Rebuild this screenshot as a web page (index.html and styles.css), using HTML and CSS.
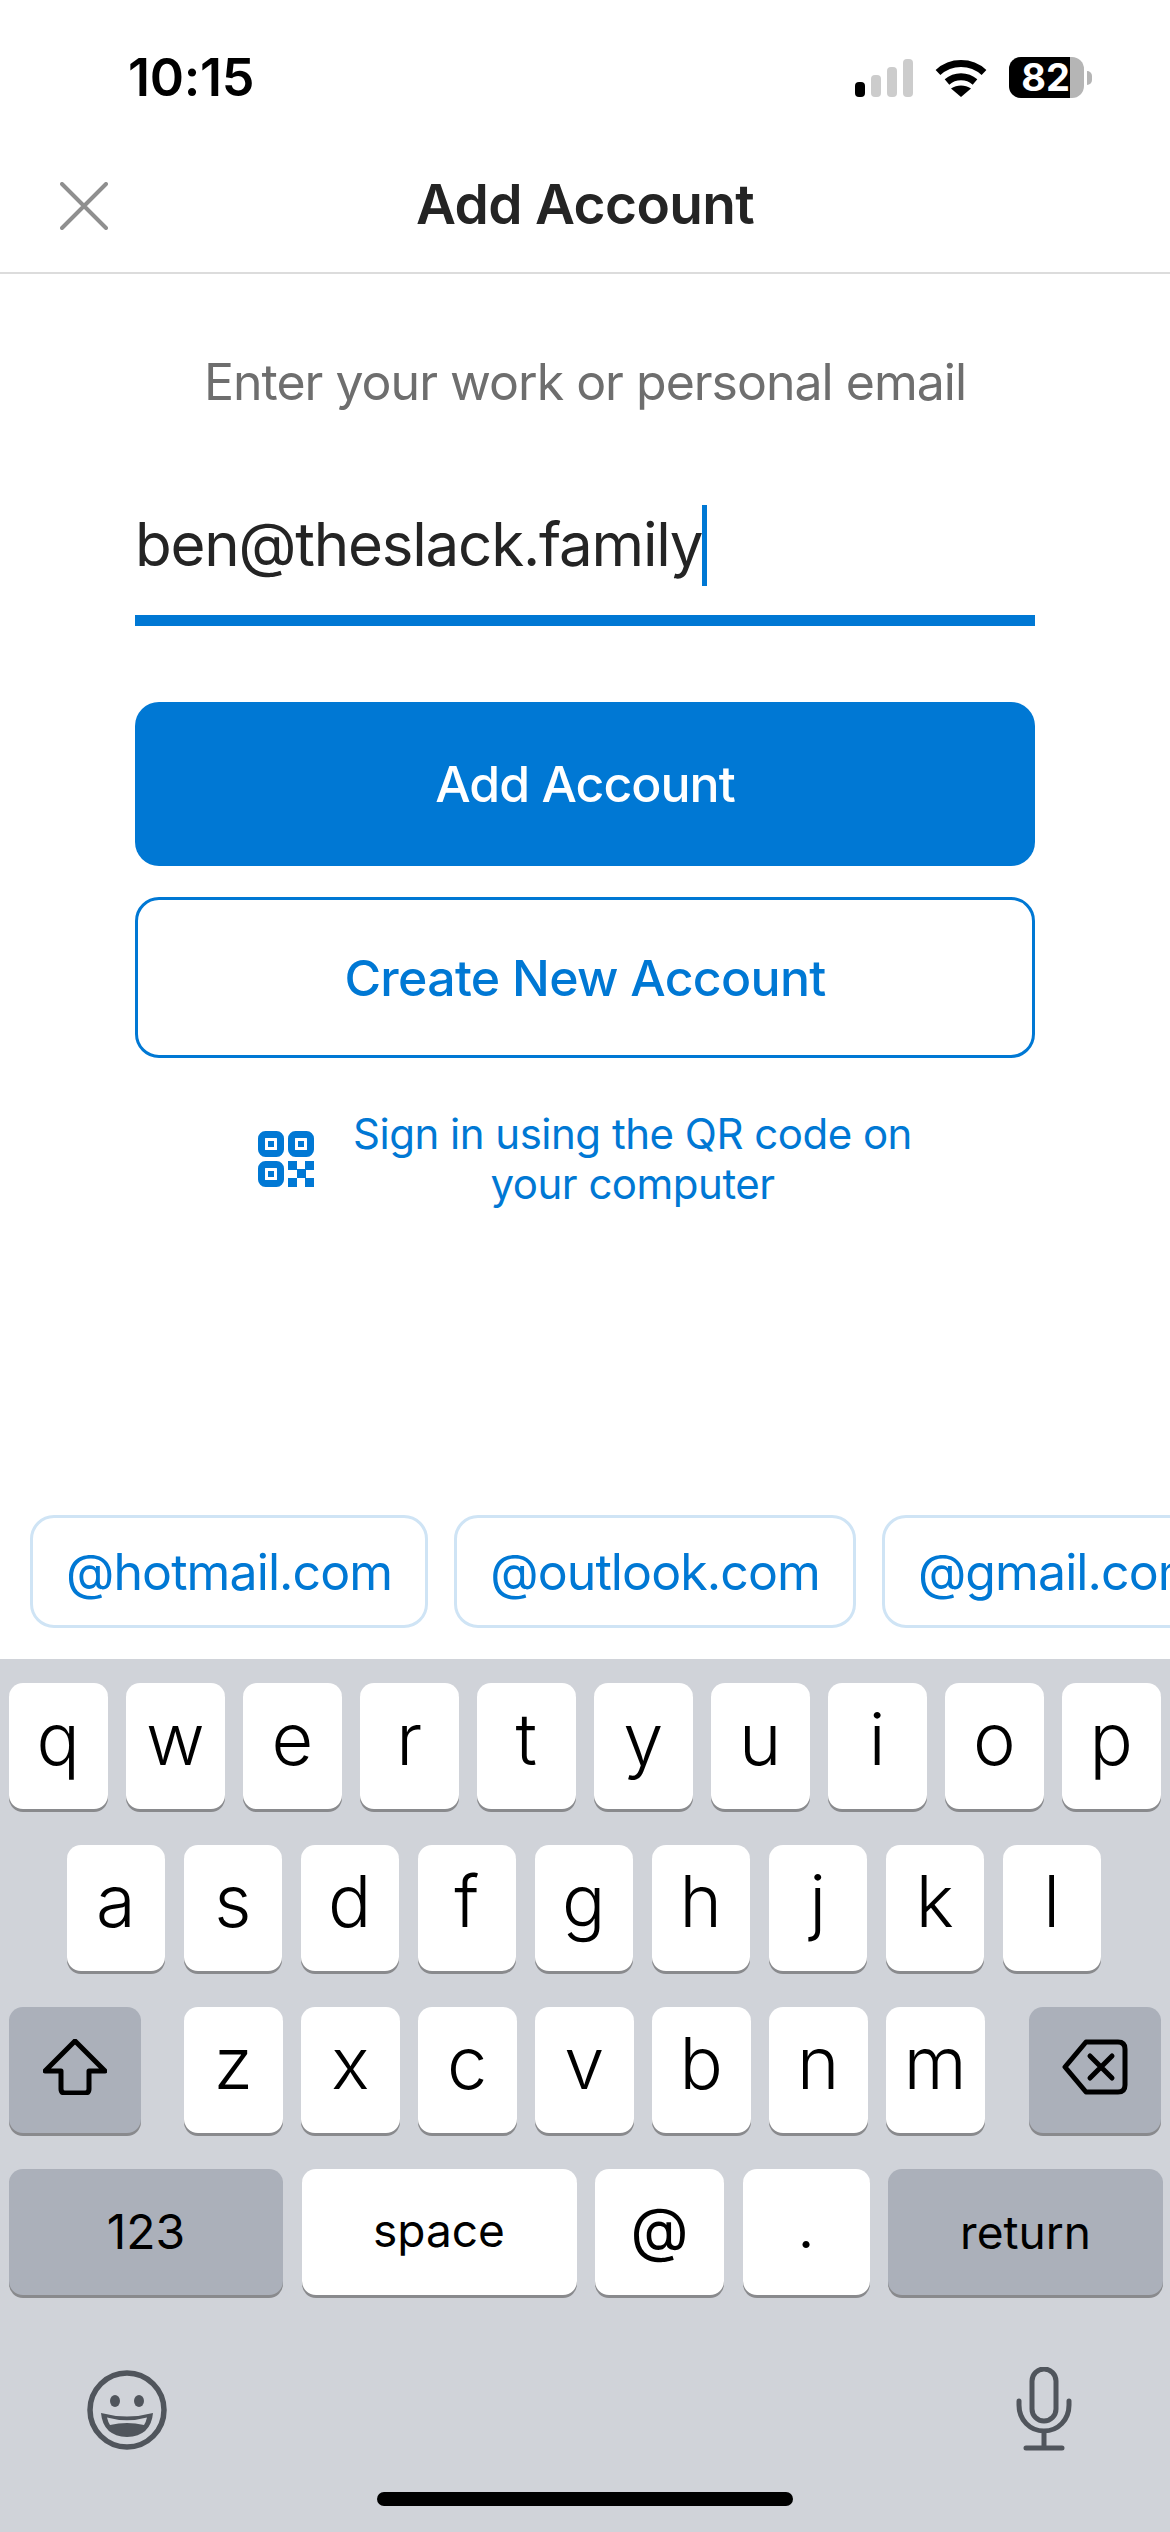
FILE: index.html
```html
<!DOCTYPE html>
<html lang="en">
<head>
<meta charset="utf-8">
<title>Add Account</title>
<link rel="stylesheet" href="styles.css">
</head>
<body>
<div class="screen">
  <div class="status">
    <span class="time">10:15</span>
    <div class="status-icons">
      <svg class="signal" width="58" height="38" viewBox="0 0 58 38"><rect x="0" y="23" width="10" height="15" rx="4" fill="#000"/><rect x="16" y="16" width="10" height="22" rx="4" fill="#ccc"/><rect x="32" y="8" width="10" height="30" rx="4" fill="#ccc"/><rect x="48" y="0" width="10" height="38" rx="4" fill="#ccc"/></svg>
      <svg class="wifi" width="52" height="38" viewBox="0 0 52 38"><path d="M3 13.5C16 1.5 36 1.500 49 13.500" fill="none" stroke="#000" stroke-width="7"/><path d="M12 23C20 16 32 16 40 23" fill="none" stroke="#000" stroke-width="7"/><path d="M26 38L16 29.500C22 25.500 30 25.500 36 29.500Z" fill="#000"/></svg>
      <div class="battery"><div class="battery-fill"><span class="battery-num">82</span></div></div>
      <div class="battery-nub"></div>
    </div>
  </div>
  <header class="nav">
    <svg class="close" width="48" height="48" viewBox="0 0 48 48"><path d="M2 2L46 46M46 2L2 46" fill="none" stroke="#8f8f8f" stroke-width="4" stroke-linecap="round"/></svg>
    <h1 class="title">Add Account</h1>
  </header>
  <main class="main">
    <p class="prompt">Enter your work or personal email</p>
    <div class="field"><span class="field-text">ben@theslack.family</span><span class="caret"></span></div>
    <button class="btn btn-primary">Add Account</button>
    <button class="btn btn-outline">Create New Account</button>
    <div class="qr">
      <svg class="qr-icon" width="56" height="56" viewBox="0 0 56 56">
        <g fill="none" stroke="#0078d4" stroke-width="7"><rect x="3.500" y="3.500" width="19" height="19" rx="4"/><rect x="33.500" y="3.500" width="19" height="19" rx="4"/><rect x="3.500" y="33.500" width="19" height="19" rx="4"/></g>
        <g fill="#0078d4"><rect x="10" y="10" width="6" height="6"/><rect x="40" y="10" width="6" height="6"/><rect x="10" y="40" width="6" height="6"/><rect x="30" y="30" width="9" height="9"/><rect x="47" y="30" width="9" height="9"/><rect x="39" y="38" width="9" height="9"/><rect x="30" y="47" width="9" height="9"/><rect x="47" y="47" width="9" height="9"/></g>
      </svg>
      <span class="qr-text">Sign in using the QR code on<br>your computer</span>
    </div>
  </main>
  <div class="chips">
    <span class="chip">@hotmail.com</span>
    <span class="chip">@outlook.com</span>
    <span class="chip">@gmail.com</span>
  </div>
  <section class="keyboard">
    <div class="row">
      <span class="key">q</span><span class="key">w</span><span class="key">e</span><span class="key">r</span><span class="key">t</span><span class="key">y</span><span class="key">u</span><span class="key">i</span><span class="key">o</span><span class="key">p</span>
    </div>
    <div class="row row-mid">
      <span class="key">a</span><span class="key">s</span><span class="key">d</span><span class="key">f</span><span class="key">g</span><span class="key">h</span><span class="key">j</span><span class="key">k</span><span class="key">l</span>
    </div>
    <div class="row">
      <span class="key key-mod key-side"><svg width="64" height="56" viewBox="0 0 64 56"><path d="M32 2L2 32H18V50Q18 54 22 54H42Q46 54 46 50V32H62Z" fill="none" stroke="#000" stroke-width="5" stroke-linejoin="round"/></svg></span>
      <span class="key key-first">z</span><span class="key">x</span><span class="key">c</span><span class="key">v</span><span class="key">b</span><span class="key">n</span><span class="key">m</span>
      <span class="key key-mod key-side key-del"><svg width="66" height="56" viewBox="0 0 66 56"><path d="M24 3H56Q63 3 63 10V46Q63 53 56 53H24L3 28Z" fill="none" stroke="#000" stroke-width="5" stroke-linejoin="round"/><path d="M28 17L50 39M50 17L28 39" fill="none" stroke="#000" stroke-width="5" stroke-linecap="round"/></svg></span>
    </div>
    <div class="row">
      <span class="key key-mod key-word key-num">123</span>
      <span class="key key-word key-space">space</span>
      <span class="key key-at">@</span>
      <span class="key key-dot">.</span>
      <span class="key key-mod key-word key-return">return</span>
    </div>
    <div class="kb-tools">
      <svg class="emoji" width="80" height="80" viewBox="0 0 80 80"><circle cx="40" cy="40" r="37" fill="none" stroke="#50555c" stroke-width="5.500"/><ellipse cx="28" cy="31" rx="5" ry="6" fill="#50555c"/><ellipse cx="52" cy="31" rx="5" ry="6" fill="#50555c"/><path d="M14 43Q40 50 66 43Q64 66 40 67Q16 66 14 43Z" fill="#50555c"/><path d="M20 47.500Q40 53 60 47.500Q59 52 57 55Q40 51 23 55Q21 52 20 47.500Z" fill="#d0d3d9"/></svg>
      <svg class="mic" width="56" height="84" viewBox="0 0 56 84"><rect x="16" y="2" width="24" height="52" rx="12" fill="none" stroke="#50555c" stroke-width="5"/><path d="M3 34V38C3 53 14 64 28 64C42 64 53 53 53 38V34M28 64V81M10 81H46" fill="none" stroke="#50555c" stroke-width="5" stroke-linecap="round"/></svg>
    </div>
    <div class="home-bar"></div>
  </section>
</div>
</body>
</html>
```
FILE: styles.css
```css
* { box-sizing: border-box; }
html, body { margin: 0; padding: 0; background: #fff; }
body { font-family: Inter, "Liberation Sans", sans-serif; color: #242424; }
.screen { width: 1170px; height: 2532px; overflow: hidden; display: flex; flex-direction: column; background: #fff; }

.status { height: 140px; padding: 16px 78px 0 128px; display: flex; align-items: center; justify-content: space-between; }
.time { font-size: 52px; font-weight: 600; color: #000; letter-spacing: -0.3px; line-height: 1; }
.status-icons { display: flex; align-items: center; margin-top: -1px; }
.signal { margin-right: 22px; }
.wifi { margin-right: 22px; }
.battery { width: 75px; height: 41px; border-radius: 12px; background: #b5b5b5; }
.battery-fill { width: 61px; height: 41px; background: #000; border-radius: 12px 0 0 12px; display: flex; align-items: center; justify-content: flex-end; }
.battery-num { color: #fff; font-size: 38px; font-weight: 700; line-height: 41px; }
.battery-nub { width: 5px; height: 14px; margin-left: 3px; background: #b5b5b5; border-radius: 0 7px 7px 0; }

.nav { height: 134px; border-bottom: 2px solid #dcdcdc; position: relative; display: flex; align-items: center; justify-content: center; padding-bottom: 3px; }
.close { position: absolute; left: 60px; top: 42px; }
.title { margin: 0; font-size: 55px; font-weight: 600; line-height: 1; color: #242424; letter-spacing: -0.65px; }

.main { flex: 1; padding: 0 135px; display: flex; flex-direction: column; }
.prompt { margin: 78px 0 0; height: 60px; line-height: 60px; text-align: center; font-size: 50px; letter-spacing: -1px; color: #6e6e6e; white-space: nowrap; }
.field { margin-top: 93px; height: 121px; padding-bottom: 29px; border-bottom: 11px solid #0078d4; display: flex; align-items: center; }
.field-text { font-size: 60px; letter-spacing: -1.2px; color: #242424; white-space: nowrap; line-height: 1; margin-bottom: 4px; }
.caret { width: 5px; height: 81px; background: #0078d4; }
.btn { display: block; width: 900px; margin: 0; font-family: inherit; font-size: 50px; font-weight: 500; line-height: 1; }
.btn-primary { margin-top: 76px; height: 164px; border: 0; border-radius: 24px; background: #0078d4; color: #fff; letter-spacing: -1px; }
.btn-outline { margin-top: 31px; height: 161px; border: 3px solid #0078d4; border-radius: 24px; background: #fff; color: #0078d4; letter-spacing: -0.7px; }
.qr { margin-top: 51px; display: flex; align-items: center; justify-content: center; }
.qr-icon { margin: 0 39px 0 0; flex: none; }
.qr-text { font-size: 42px; letter-spacing: -0.5px; line-height: 50px; color: #0078d4; text-align: center; white-space: nowrap; }

.chips { display: flex; gap: 26px; padding-left: 30px; margin-bottom: 31px; overflow: hidden; }
.chip { flex: none; height: 113px; padding: 0 33px; border: 3px solid #cfe4f5; border-radius: 24px; color: #0078d4; font-size: 50px; letter-spacing: -0.9px; display: flex; align-items: center; justify-content: center; }

.keyboard { height: 873px; background: #d0d3d9; padding-top: 24px; display: flex; flex-direction: column; }
.row { height: 126px; margin-bottom: 36px; padding: 0 9px; display: flex; gap: 18.500px; }
.row-mid { padding-left: 66.500px; }
.key { flex: none; width: 98.500px; height: 126px; border-radius: 14px; background: #fff; box-shadow: 0 3px 0 #898a8d; color: #000; font-size: 72px; font-weight: 300; line-height: 1; display: flex; align-items: center; justify-content: center; padding-bottom: 14px; }
.key-mod { background: #abb0ba; }
.key-side { width: 132px; padding-bottom: 6px; }
.key-first { margin-left: 24.500px; }
.key-del { margin-left: 26px; }
.key-word { font-size: 48px; font-weight: 400; padding-bottom: 0; }
.key-num { width: 274px; }
.key-space { width: 275px; padding-bottom: 4px; font-size: 46px; }
.key-at { width: 129px; font-size: 60px; padding-bottom: 6px; font-weight: 400; }
.key-dot { width: 127px; font-size: 54px; padding-bottom: 6px; font-weight: 400; }
.key-return { width: 275px; font-size: 46px; }
.kb-tools { display: flex; justify-content: space-between; align-items: flex-start; padding: 39px 98px 0 87px; height: 0; }
.mic { margin-top: -3px; }
.home-bar { width: 416px; height: 14px; border-radius: 7px; background: #000; margin: auto auto 26px; }
```
